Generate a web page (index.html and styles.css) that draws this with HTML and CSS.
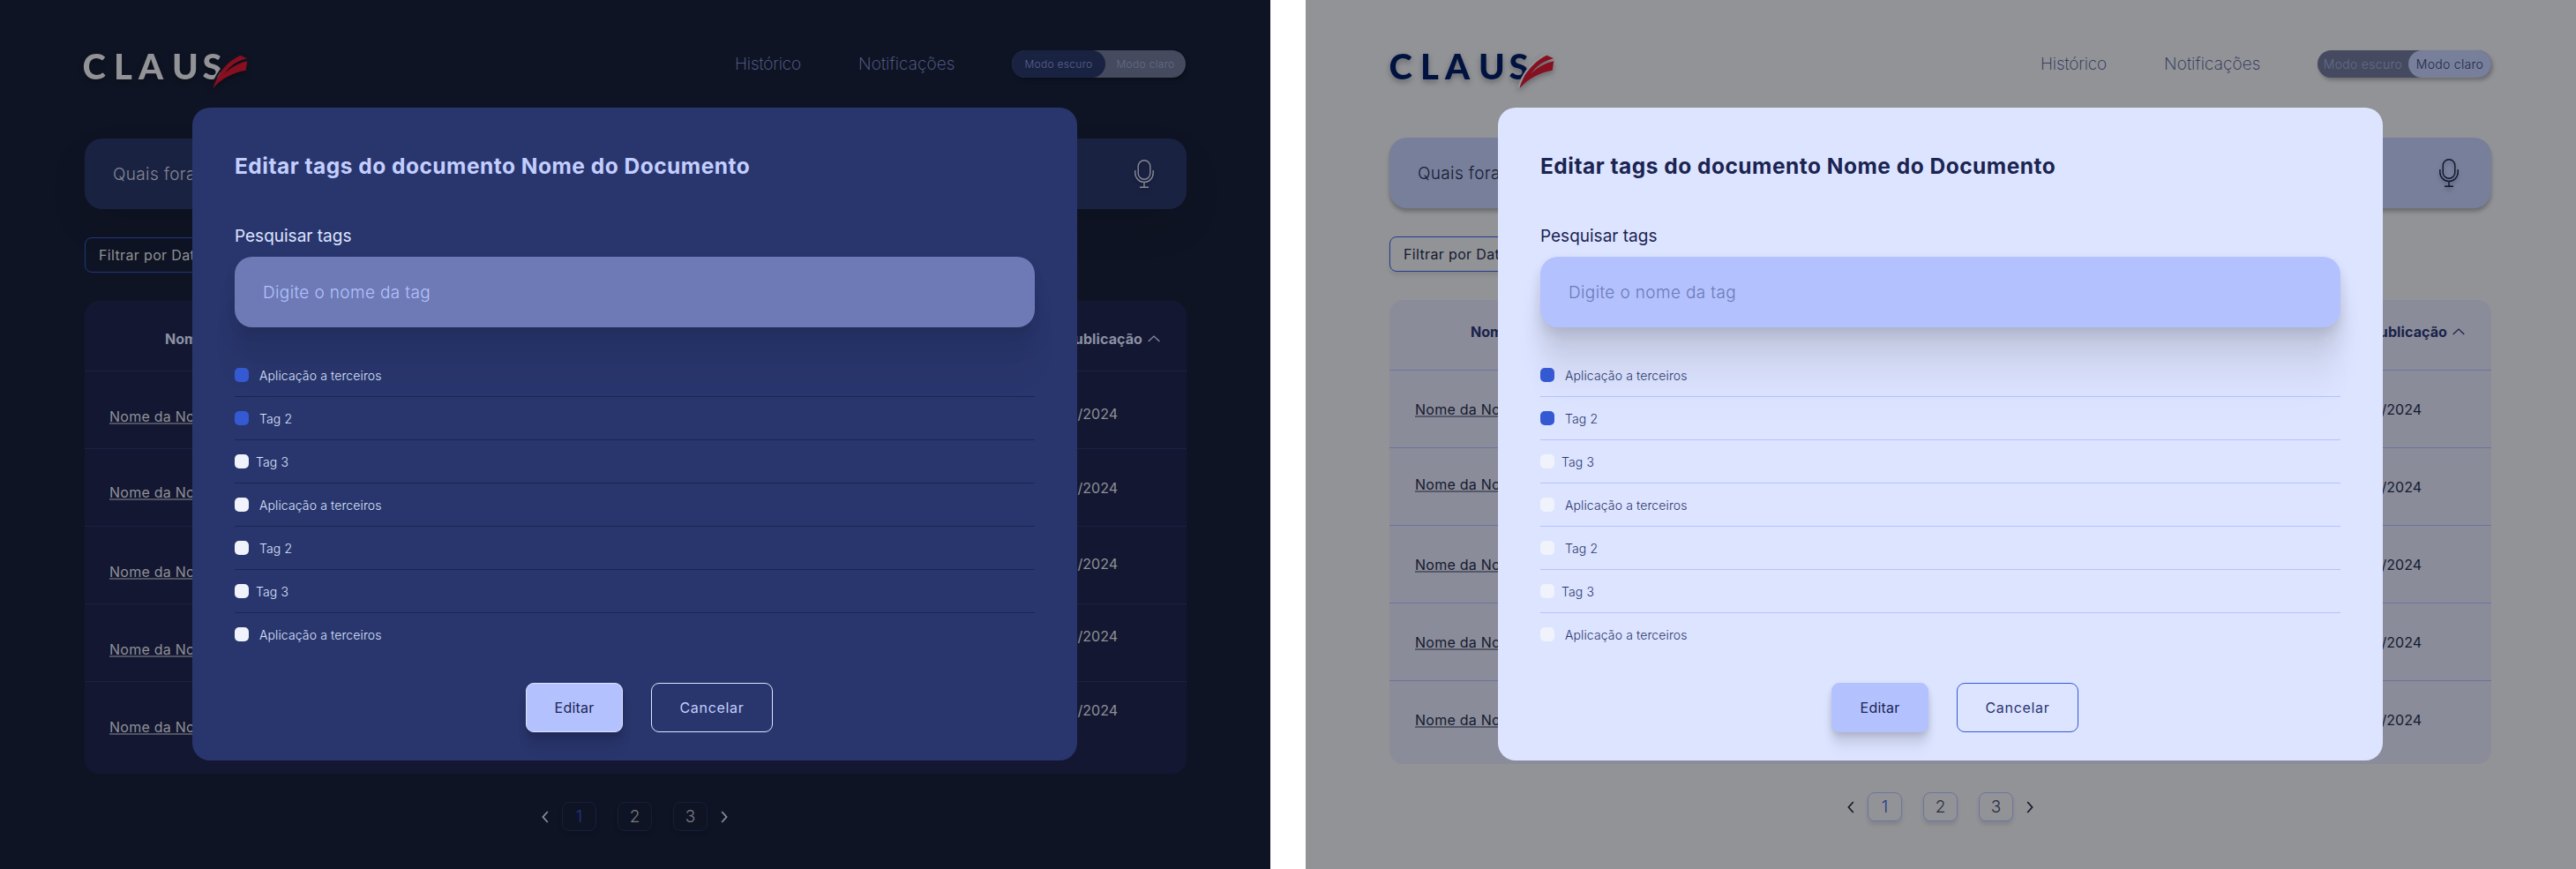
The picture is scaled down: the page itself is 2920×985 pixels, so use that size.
FILE: index.html
```html
<!DOCTYPE html>
<html lang="pt-BR">
<head>
<meta charset="utf-8">
<title>Claus</title>
<link rel="stylesheet" href="styles.css">
</head>
<body>
<svg class="defs" width="0" height="0">
  <symbol id="mic" viewBox="0 0 22 32">
    <g fill="none" stroke="currentColor" stroke-width="1.4">
      <rect x="4.2" y=".8" width="13.6" height="21.4" rx="6.8"/>
      <path d="M.8 12v3.2a10.2 10.2 0 0 0 20.4 0V12M11 25.6V31M6 31.2h10"/>
    </g>
  </symbol>
  <symbol id="left" viewBox="0 0 8 14"><path d="M6.8 1 1.4 7l5.4 6" fill="none" stroke="currentColor" stroke-width="1.7"/></symbol>
  <symbol id="right" viewBox="0 0 8 14"><path d="M1.2 1 6.6 7l-5.4 6" fill="none" stroke="currentColor" stroke-width="1.7"/></symbol>
  <symbol id="up" viewBox="0 0 14 8"><path d="M.7 7 7 1.1 13.3 7" fill="none" stroke="currentColor" stroke-width="1.3"/></symbol>
</svg>
<div class="screens">
  <section class="screen dark">
    <header class="header">
      <svg class="logo" width="195" height="61" viewBox="0 -8 195 61">
        <text class="logo-text" x="3.5 39 67 105 139.5" y="39.5">CLAUS</text>
        <g transform="translate(0 -8) scale(.33333) translate(-90 -36)">
          <path class="logo-gap" d="M541 208C550 176 576 124 633 95"/>
          <path class="logo-mark" d="M545 210C552 180 580 125 637 98L660 109C625 118 600 135 583 162C600 142 630 125 661 118L656 149C615 156 575 175 545 210Z"/>
        </g>
      </svg>
      <nav class="nav"><a class="n1">Histórico</a><a class="n2">Notificações</a></nav>
      <div class="toggle"><span class="mode active">Modo escuro</span><span class="mode">Modo claro</span></div>
    </header>
    <main class="main">
      <div class="search"><span>Quais foram</span><svg width="22" height="32"><use href="#mic"/></svg></div>
      <div class="filter">Filtrar por Data</div>
      <div class="table">
        <div class="thead"><span>Nome</span><span class="sort">Publicação<svg width="14" height="8"><use href="#up"/></svg></span></div>
        <div class="row r1"><a>Nome da Norma</a><span>01/2024</span></div>
        <div class="row r2"><a>Nome da Norma</a><span>01/2024</span></div>
        <div class="row r3"><a>Nome da Norma</a><span>01/2024</span></div>
        <div class="row r4"><a>Nome da Norma</a><span>01/2024</span></div>
        <div class="row r5"><a>Nome da Norma</a><span>01/2024</span></div>
      </div>
      <div class="pages">
        <svg width="8" height="14"><use href="#left"/></svg>
        <div class="nums"><span class="page current">1</span><span class="page">2</span><span class="page">3</span></div>
        <svg width="8" height="14"><use href="#right"/></svg>
      </div>
    </main>
    <div class="modal">
      <h1>Editar tags do documento Nome do Documento</h1>
      <label>Pesquisar tags</label>
      <div class="input">Digite o nome da tag</div>
      <ul class="tags">
        <li><i class="box on"></i>Aplicação a terceiros</li>
        <li><i class="box on"></i>Tag 2</li>
        <li class="near"><i class="box"></i>Tag 3</li>
        <li><i class="box"></i>Aplicação a terceiros</li>
        <li><i class="box"></i>Tag 2</li>
        <li class="near"><i class="box"></i>Tag 3</li>
        <li><i class="box"></i>Aplicação a terceiros</li>
      </ul>
      <div class="actions"><span class="btn primary">Editar</span><span class="btn outline">Cancelar</span></div>
    </div>
  </section>
  <section class="screen light">
    <header class="header">
      <svg class="logo" width="195" height="61" viewBox="0 -8 195 61">
        <text class="logo-text" x="3.5 39 67 105 139.5" y="39.5">CLAUS</text>
        <g transform="translate(0 -8) scale(.33333) translate(-90 -36)">
          <path class="logo-gap" d="M541 208C550 176 576 124 633 95"/>
          <path class="logo-mark" d="M545 210C552 180 580 125 637 98L660 109C625 118 600 135 583 162C600 142 630 125 661 118L656 149C615 156 575 175 545 210Z"/>
        </g>
      </svg>
      <nav class="nav"><a class="n1">Histórico</a><a class="n2">Notificações</a></nav>
      <div class="toggle"><span class="mode">Modo escuro</span><span class="mode active">Modo claro</span></div>
    </header>
    <main class="main">
      <div class="search"><span>Quais foram</span><svg width="22" height="32"><use href="#mic"/></svg></div>
      <div class="filter">Filtrar por Data</div>
      <div class="table">
        <div class="thead"><span>Nome</span><span class="sort">Publicação<svg width="14" height="8"><use href="#up"/></svg></span></div>
        <div class="row r1"><a>Nome da Norma</a><span>01/2024</span></div>
        <div class="row r2"><a>Nome da Norma</a><span>01/2024</span></div>
        <div class="row r3"><a>Nome da Norma</a><span>01/2024</span></div>
        <div class="row r4"><a>Nome da Norma</a><span>01/2024</span></div>
        <div class="row r5"><a>Nome da Norma</a><span>01/2024</span></div>
      </div>
      <div class="pages">
        <svg width="8" height="14"><use href="#left"/></svg>
        <div class="nums"><span class="page current">1</span><span class="page">2</span><span class="page">3</span></div>
        <svg width="8" height="14"><use href="#right"/></svg>
      </div>
    </main>
    <div class="modal">
      <h1>Editar tags do documento Nome do Documento</h1>
      <label>Pesquisar tags</label>
      <div class="input">Digite o nome da tag</div>
      <ul class="tags">
        <li><i class="box on"></i>Aplicação a terceiros</li>
        <li><i class="box on"></i>Tag 2</li>
        <li class="near"><i class="box"></i>Tag 3</li>
        <li><i class="box"></i>Aplicação a terceiros</li>
        <li><i class="box"></i>Tag 2</li>
        <li class="near"><i class="box"></i>Tag 3</li>
        <li><i class="box"></i>Aplicação a terceiros</li>
      </ul>
      <div class="actions"><span class="btn primary">Editar</span><span class="btn outline">Cancelar</span></div>
    </div>
  </section>
</div>
</body>
</html>
```

FILE: styles.css
```css
* { box-sizing: border-box; }
body { margin: 0; background: #fff; font-family: Inter, "Open Sans", sans-serif; font-size: 16px; }
.defs { display: block; }
.screens { display: flex; gap: 40px; height: 985px; }
.screen { position: relative; width: 1440px; height: 985px; overflow: hidden; background: var(--bg); color: var(--text); }

.dark {
  --bg: #0f1424; --text: #8f9196; --nav: #5c6594;
  --track: #454a5e; --pill: #1a2242; --on-pill: #59628e; --off: #646c8a;
  --search: #1a2242; --hint: #858995; --filter-line: #20357e;
  --table: #131732; --head: #8b91a4; --line: #1a2242; --underline: #4f5162;
  --page-line: #181d3b; --page: #777a85; --current: #22348a;
  --modal: #29366d; --title: #c3ceff; --label: #dde4ff;
  --input: #6d7ab5; --placeholder: #b3c2ff; --tag-line: #1b2452;
  --btn-line: #dde4ff; --btn2-line: #dde4ff; --btn2-text: #c3ceff;
  --name: 39px; --name2: 36.5px; --top: 12px;
  --shadow: rgba(0,0,0,.25);
}
.light {
  --bg: #929397; --text: #141a30; --nav: #283058;
  --track: #454a60; --pill: #777f9b; --on-pill: #202848; --off: #636b8a;
  --search: #777f9b; --hint: #141a30; --filter-line: #233b8e;
  --table: #8b8c99; --head: #19224a; --line: #6a739f; --underline: #55586a;
  --page-line: #6b75a2; --page: #2a2e42; --current: #22368a;
  --modal: #dde4ff; --title: #1b2452; --label: #1b2452;
  --input: #b3c2ff; --placeholder: #6d7ab5; --tag-line: #b3c2ff;
  --btn-line: #b3c2ff; --btn2-line: #3559d3; --btn2-text: #29366d;
  --name: 32px; --name2: 29px; --top: 11px;
  --shadow: rgba(0,0,0,.25);
}

.header { display: flex; align-items: center; height: 145px; padding: 0 96px 0 90px; }
.logo { overflow: visible; filter: drop-shadow(0 3px 3px rgba(0,0,0,.3)); }
.light .logo { margin-left: 1px; }
.logo-text { font: 900 40px Lato, sans-serif; fill: #929397; }
.light .logo-text { fill: #001240; }
.logo-gap { fill: none; stroke: var(--bg); stroke-width: 7; }
.logo-mark { fill: #870f1f; }
.nav { display: flex; gap: 65px; margin: 0 65px 0 auto; font-size: 19px; font-weight: 200; color: var(--nav); }
.nav a { display: block; white-space: nowrap; }
.n1 { width: 75px; letter-spacing: -.15px; }
.n2 { width: 109px; letter-spacing: .1px; }
.toggle { display: flex; width: 197px; height: 31px; border-radius: 16px; background: var(--track); box-shadow: 2px 3px 4px var(--shadow); font-size: 12px; font-weight: 300; letter-spacing: .3px; color: var(--off); }
.light .toggle { font-size: 14px; }
.mode { flex: 1; text-align: center; line-height: 31px; white-space: nowrap; }
.mode.active { flex: none; width: 106px; border-radius: 16px; background: var(--pill); color: var(--on-pill); }
.light .mode.active { width: 94px; }

.main { width: 1249px; margin: var(--top) 0 0 96px; }
.light .main { margin-left: 95px; }
.search { display: flex; align-items: center; justify-content: space-between; height: 80px; padding: 0 37px 0 32px; border-radius: 20px; background: var(--search); font-size: 19px; font-weight: 300; letter-spacing: .35px; color: var(--hint); box-shadow: 0 20px 40px rgba(0,0,0,.1); }
.search svg { filter: drop-shadow(0 3px 2px var(--shadow)); }
.light .search { box-shadow: 0 4px 4px var(--shadow); }
.light .search svg { color: #10152a; }
.filter { width: 190px; height: 40px; margin: 32px 0; padding-left: 15px; border: 1px solid var(--filter-line); border-radius: 8px; line-height: 39px; letter-spacing: .35px; }
.light .filter { box-shadow: 0 4px 4px rgba(0,0,0,.08); }

.table { height: 536px; border-radius: 16px; background: var(--table); line-height: 24px; }
.light .table { height: 526px; }
.thead, .row { display: flex; justify-content: space-between; align-items: flex-start; border-bottom: 1px solid var(--line); }
.thead { height: 80px; padding: 31px 30px 0 91px; font-weight: 700; color: var(--head); }
.light .thead { padding: 24px 30px 0 92px; }
.sort { display: flex; align-items: center; gap: 6px; letter-spacing: .1px; }
.row { height: 88px; padding: 0 78px 0 28px; }
.light .row { padding: 0 79px 0 29px; }
.row:last-child { border: 0; }
.row a { padding-top: var(--name); letter-spacing: .25px; text-decoration: underline 2px var(--underline); text-underline-offset: 1px; text-decoration-skip-ink: none; }
.r2 a { padding-top: var(--name2); }
.row span { padding-top: 32px; }
.dark .r1 span { padding-top: 35.5px; }
.dark .r2 span { padding-top: 31.5px; }
.dark .r3 span { padding-top: 29.5px; }
.dark .r4 span { padding-top: 23.5px; }
.dark .r5 span { padding-top: 19.5px; }

.pages { display: flex; align-items: center; gap: 15px; margin: 32px 0 0 518px; font-size: 19px; font-weight: 300; color: var(--page); }
.pages > svg { color: var(--text); }
.light .pages { margin-left: 519px; }
.nums { display: flex; gap: 24px; }
.page { width: 39px; height: 33px; border: 1px solid var(--page-line); border-radius: 8px; line-height: 31px; text-align: center; box-shadow: 0 4px 4px rgba(0,0,0,.1); }
.current { color: var(--current); }

.modal { position: absolute; left: 218px; top: 122px; width: 1003px; height: 740px; padding: 50px 48px 0; border-radius: 20px; background: var(--modal); }
.modal h1 { margin: 0; font-size: 24.5px; line-height: 32px; font-weight: 700; letter-spacing: .49px; color: var(--title); }
.modal label { display: block; margin: 50px 0 9px; font-size: 19px; line-height: 28px; color: var(--label); }
.input { height: 80px; padding-left: 32px; border-radius: 20px; background: var(--input); line-height: 81px; font-size: 19px; font-weight: 300; letter-spacing: .37px; color: var(--placeholder); box-shadow: 0 6px 13px rgba(0,0,0,.1), 0 24px 24px rgba(0,0,0,.09), 0 55px 33px rgba(0,0,0,.05), 0 98px 39px rgba(0,0,0,.01); }
.dark .input { box-shadow: 0 6px 13px rgba(0,0,0,.07), 0 24px 24px rgba(0,0,0,.06), 0 55px 33px rgba(0,0,0,.04); }
.tags { margin: 30px 0 31px; padding: 0; list-style: none; font-size: 14px; font-weight: 300; letter-spacing: .12px; color: var(--label); }
.light .tags { color: #29366d; }
.tags li { display: flex; align-items: center; gap: 12px; height: 49px; border-bottom: 1px solid var(--tag-line); }
.tags .near { gap: 8px; }
.tags li:last-child { height: 48px; border: 0; }
.box { width: 16px; height: 16px; border-radius: 5px; background: #f0f3fc; }
.box.on { background: #3559d3; }
.actions { display: flex; gap: 32px; margin-left: 330px; }
.btn { height: 56px; border: 1px solid; border-radius: 9px; line-height: 54px; text-align: center; }
.primary { width: 110px; background: #b3c2ff; border-color: var(--btn-line); color: #1b2452; letter-spacing: .2px; box-shadow: 0 3px 6px rgba(0,0,0,.12), 0 11px 11px rgba(0,0,0,.09), 0 22px 14px rgba(0,0,0,.03); }
.outline { width: 138px; border-color: var(--btn2-line); color: var(--btn2-text); letter-spacing: .7px; }
```
